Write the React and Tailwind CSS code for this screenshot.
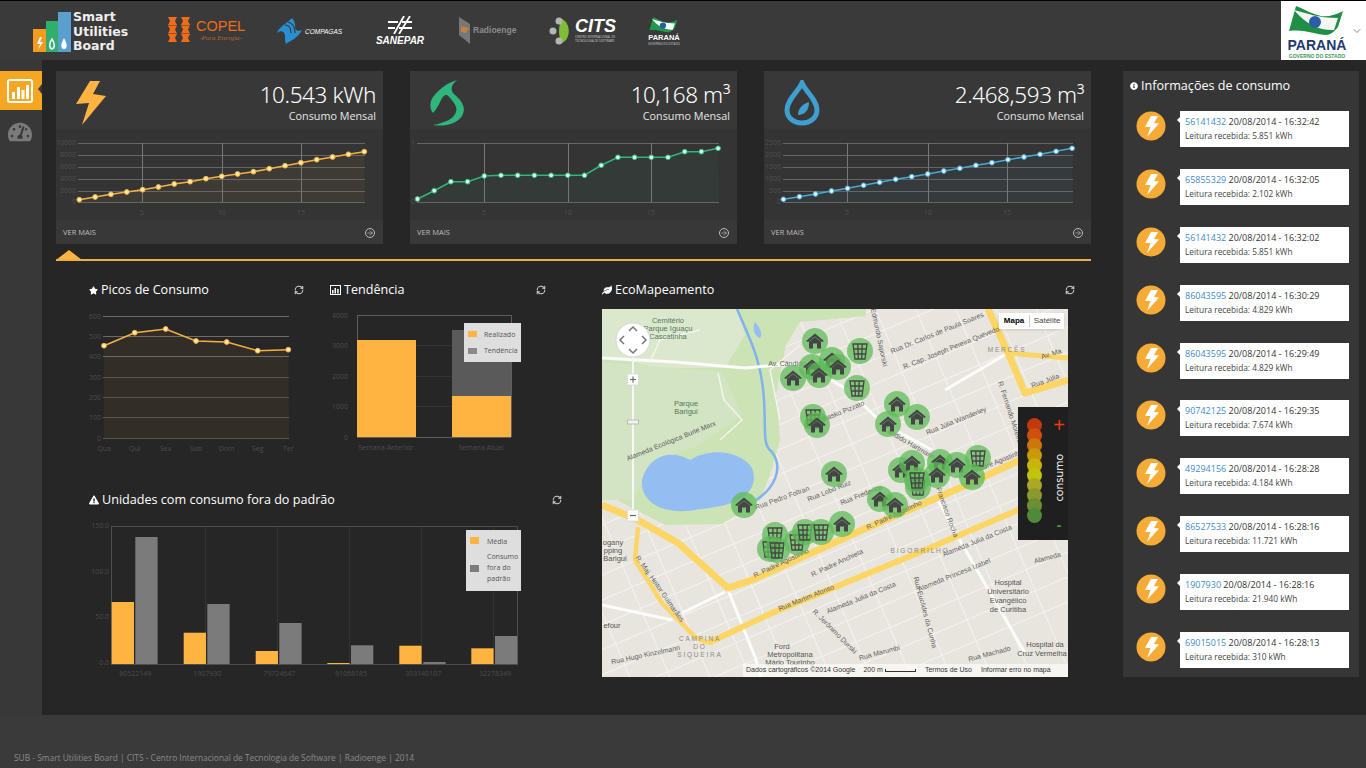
import { ArrowRight, ChevronDown, RefreshCw } from "lucide-react";
import { FaExclamationTriangle, FaInfoCircle, FaLeaf, FaStar, FaTachometerAlt } from "react-icons/fa";

const AMBER = "#ffb340";

// ---- data (screen coordinates, the svgs use them through their viewBox) ----

const cards = [
  {
    x: 56,
    value: "10.543 kWh",
    color: "#f5b041",
    dot: "#ffe9a8",
    fill: "rgba(255,179,64,0.05)",
    x0: 79.3,
    step: 15.83,
    left: 78,
    right: 365,
    ys: [199.7, 197, 194.3, 192, 189.7, 187, 184, 181.7, 178.7, 176.3, 174, 171.7, 168.7, 165.7, 162.7, 159.7, 157, 154.3, 151.7],
    gridY: [143, 155, 167, 179, 191, 202],
    gridX: [142, 222, 301],
    yLabels: ["10000", "8000", "6000", "4000", "2000", "0"],
  },
  {
    x: 410,
    value: "10,168 m³",
    color: "#2eb67d",
    dot: "#d6ffe9",
    fill: "rgba(46,182,125,0.05)",
    x0: 417.5,
    step: 16.7,
    left: 417,
    right: 719,
    ys: [199, 190.7, 181.7, 181.7, 176, 175.3, 175.3, 175.3, 175.3, 175.3, 175.3, 165.3, 157.3, 157.3, 157.3, 157.3, 151.7, 151.7, 148.3],
    gridY: [143, 202],
    gridX: [484, 568, 651],
    yLabels: ["1", "0"],
  },
  {
    x: 764,
    value: "2.468,593 m³",
    color: "#49a9d6",
    dot: "#d9f4ff",
    fill: "rgba(73,169,214,0.05)",
    x0: 783.4,
    step: 16.04,
    left: 783,
    right: 1073,
    ys: [199.3, 196.7, 194, 191, 188.3, 185.3, 182.3, 179.3, 176.7, 174, 171, 168.3, 165.3, 162.7, 159.7, 157, 154.3, 151.3, 148.3],
    gridY: [143, 155, 167, 179, 191, 202],
    gridX: [847, 928, 1007],
    yLabels: ["2500", "2000", "1500", "1000", "500", "0"],
  },
];

const leituras = [
  ["56141432", "16:32:42", "5.851"],
  ["65855329", "16:32:05", "2.102"],
  ["56141432", "16:32:02", "5.851"],
  ["86043595", "16:30:29", "4.829"],
  ["86043595", "16:29:49", "4.829"],
  ["90742125", "16:29:35", "7.674"],
  ["49294156", "16:28:28", "4.184"],
  ["86527533", "16:28:16", "11.721"],
  ["1907930", "16:28:16", "21.940"],
  ["69015015", "16:28:13", "310"],
];

const picos = [
  [104, 345.7],
  [134.7, 332.7],
  [165.7, 329],
  [196, 341],
  [226.7, 342],
  [257.7, 350.7],
  [288.3, 349.7],
];

const foraPadrao = [
  ["80522149", 111.7, 602, 135.3, 537],
  ["1907930", 183.7, 632.7, 207.3, 604],
  ["79724647", 255.7, 651, 279.3, 623],
  ["91068185", 327.3, 663, 351, 645.3],
  ["303140107", 399.3, 645.7, 423.3, 662],
  ["32278349", 471.3, 648.3, 495, 636],
];

const marcadores = [
  ["h", 815, 341], ["b", 860, 351], ["h", 812, 367], ["h", 832, 360], ["h", 838, 367],
  ["h", 819, 375], ["h", 793, 378], ["b", 857, 388], ["b", 813, 417], ["h", 817, 425],
  ["h", 897, 404], ["h", 917, 417], ["h", 888, 424], ["h", 834, 474], ["h", 744, 505],
  ["b", 775, 535], ["b", 770, 549], ["b", 777, 550], ["b", 797, 542], ["b", 805, 532],
  ["b", 821, 532], ["h", 842, 524], ["h", 880, 499], ["h", 895, 505], ["h", 901, 470],
  ["h", 912, 463], ["h", 940, 462], ["h", 957, 465], ["b", 978, 458], ["h", 972, 477],
  ["b", 918, 487], ["h", 937, 475], ["b", 917, 480],
];

const ruas = [
  [938, 335, -22, "Rua Dr. Carlos de Paula Soares"],
  [952, 350, -22, "R. Cap. Joseph Pereira Quevedo"],
  [877, 338, 78, "Edmundo Saporski"],
  [787, 366, 0, "Av. Cândido"],
  [1052, 356, -18, "Av. Ma"],
  [1046, 383, -20, "Rua Júlia"],
  [1008, 413, 72, "R. Fernando Moreira"],
  [957, 423, -22, "Rua Júlia Wanderley"],
  [835, 417, -22, "Rua Bolasko Pizzato"],
  [908, 445, 30, "Cândido Hartmann"],
  [672, 443, -22, "Alameda Ecológica Burle Marx"],
  [1000, 463, -22, "Padre Agostinho"],
  [783, 500, -20, "Rua Pedro Foltran"],
  [830, 493, -22, "Rua Lobo Ruiz"],
  [862, 497, -22, "Rua Frederico"],
  [945, 513, 70, "Francisco Rocha"],
  [895, 517, -25, "R. Padre Agostinho"],
  [782, 565, -25, "R. Padre Agostinho"],
  [838, 565, -25, "R. Padre Anchieta"],
  [807, 600, -22, "Rua Martim Afonso"],
  [862, 600, -22, "Alameda Julia da Costa"],
  [978, 543, -22, "Alameda Julia da Costa"],
  [955, 577, -22, "Alameda Princesa Izabel"],
  [923, 613, 75, "Rua Euclides da Cunha"],
  [658, 590, 55, "R. Maj. Heitor Guimarães"],
  [833, 633, 45, "R. Jerônimo Durski"],
  [646, 657, -12, "Rua Hugo Kinzelmann"],
  [1048, 560, -15, "Alameda"],
  [880, 655, -15, "Rua Marumbi"],
  [990, 656, -15, "Rua Machado"],
];

const lugares = [
  [668, 323, "Cemitério", "#54785c"],
  [668, 331, "Parque Iguaçu", "#54785c"],
  [668, 339, "Cascatinha", "#54785c"],
  [686, 406, "Parque", "#54785c"],
  [686, 414, "Barigui", "#54785c"],
  [1008, 585, "Hospital", "#555"],
  [1008, 594, "Universitário", "#555"],
  [1008, 603, "Evangélico", "#555"],
  [1008, 612, "de Curitiba", "#555"],
  [1045, 647, "Hospital da", "#555"],
  [1042, 656, "Cruz Vermelha", "#555"],
  [782, 649, "Ford", "#555"],
  [790, 657, "Metropolitana", "#555"],
  [790, 665, "Mário Tourinho", "#555"],
  [613, 545, "ogany", "#555"],
  [613, 553, "pping", "#555"],
  [615, 561, "Barigui", "#555"],
  [612, 628, "efour", "#555"],
];

const bairros = [
  [1007, 352, "MERCÊS"],
  [920, 553, "BIGORRILHO"],
  [700, 641, "CAMPINA"],
  [700, 649, "DO"],
  [700, 657, "SIQUEIRA"],
];

const escala = ["#c2380f", "#cf500d", "#cc760b", "#c89a0a", "#c8b40a", "#c2c40c", "#aaa824", "#8a9a2e", "#6b9034", "#4f8a3a"];

// ---- small drawings ----

const Bolt = ({ className }) => (
  <svg viewBox="76 16 30 44" className={className}>
    <polygon points="90,16 100,16 93,29 106,31 82,60 89,38 76,39" fill={AMBER} />
  </svg>
);

const Flame = () => (
  <svg viewBox="0 0 35 46" className="w-[35px] h-[46px]">
    <path
      d="M27 0C17 3 9 9 3 17C-1 23 0 30 3 33C7 29 9 24 11 20C13 16 16 13 18 16C22 20 28 26 26 32C24 39 14 43 3 45C14 47 27 44 32 36C37 27 31 20 24 14C20 10 21 5 27 0Z"
      fill="#2eb67d"
    />
  </svg>
);

const Drop = () => (
  <svg viewBox="0 0 36 46" className="w-[36px] h-[46px]">
    <path d="M18 3C14 12 3 20 3 30C3 38 10 43 18 43C26 43 33 38 33 30C33 20 22 12 18 3Z" fill="none" stroke="#3f9fd0" strokeWidth="5" />
    <path d="M25 22C25 30 21 35 14 35C14 29 18 24 25 22Z" fill="#3f9fd0" />
  </svg>
);

const RoundBolt = () => (
  <svg viewBox="0 0 30 30" className="w-[30px] h-[30px] shrink-0 -mt-[6px]">
    <circle cx="15" cy="15" r="14.5" fill="#f5ab35" />
    <polygon points="15,5 22,5 18,12 23,12.5 11,26 14.5,16 9,16" fill="#fff" />
  </svg>
);

const Casa = ({ x, y }) => (
  <g transform={`translate(${x} ${y})`} fill="#454545">
    <polygon points="-9,0 0,-7.5 9,0 7,1 0,-4.5 -7,1" />
    <path d="M-6 0.5L0 -4L6 0.5V7.5H2V2.5H-2V7.5H-6Z" />
  </g>
);

const Lixeira = ({ x, y }) => (
  <g transform={`translate(${x} ${y})`} fill="none" stroke="#454545" strokeWidth="1.3">
    <path d="M-7 -7H7L5 8H-5Z" />
    <path d="M-6.5 -2H6.5M-6 3H6M-2.2 -7L-1.7 8M2.2 -7L1.7 8" />
  </g>
);

const BarsIcon = () => (
  <svg viewBox="0 0 26 24" className="w-[26px] h-[24px]">
    <rect x="1" y="1" width="24" height="22" rx="2" fill="none" stroke="#fff" strokeWidth="2" />
    <path d="M5 13h3v7H5zM10 8h3v12h-3zM14.5 11h3v9h-3zM19 6h3v14h-3z" fill="#fff" />
  </svg>
);

const SmallBars = () => (
  <svg viewBox="0 0 11 10" className="w-[11px] h-[10px]">
    <rect x="0.5" y="0.5" width="10" height="9" fill="none" stroke="#fff" />
    <path d="M2 5h1.5v3.5H2zM4.5 3h1.5v5.5H4.5zM7.2 4h1.5v4.5H7.2z" fill="#fff" />
  </svg>
);

const Title = ({ icon, text, className }) => (
  <div className={`flex items-center justify-between h-4 ${className}`}>
    <div className="flex items-center gap-[3px]">
      {icon}
      <span className="text-[12.6px] leading-4 text-white whitespace-nowrap">{text}</span>
    </div>
    <RefreshCw size={10} strokeWidth={2.5} className="text-[#cfcfcf] mr-px" />
  </div>
);

// ---- top cards ----

const Card = ({ card, icon }) => {
  const pts = card.ys.map((y, i) => [card.x0 + i * card.step, y]);
  const line = pts.map((p) => p.join(",")).join(" ");
  const bottom = card.gridY[card.gridY.length - 1];

  return (
    <div className="w-[327px] h-[173px] bg-[#383838] flex flex-col">
      <div className="h-[58px] flex justify-between">
        <div className="ml-5 mt-[9px]">{icon}</div>
        <div className="text-right pr-[7px] pt-[10px]">
          <p className="text-[22.5px] leading-[28px] font-light text-white font-['Noto_Sans',sans-serif] tracking-[-0.4px]">{card.value}</p>
          <p className="text-[10.8px] leading-[14px] text-[#e6e6e6]">Consumo Mensal</p>
        </div>
      </div>
      <svg viewBox={`${card.x} 129 327 91`} className="w-[327px] h-[91px] bg-[#343434]">
        <polygon points={`${card.x0},${bottom} ${line} ${card.right},${bottom}`} fill={card.fill} />
        {card.gridY.map((y) => (
          <line key={y} x1={card.left} x2={card.right} y1={y} y2={y} stroke="#666" strokeWidth="1" shapeRendering="crispEdges" />
        ))}
        {card.gridX.map((x) => (
          <line key={x} x1={x} x2={x} y1={143} y2={bottom} stroke="#777" strokeWidth="1" shapeRendering="crispEdges" />
        ))}
        {card.gridY.map((y, i) => (
          <text key={y} x={card.left - 2} y={y + 2} fontSize="7" fill="#4f4f4f" textAnchor="end">
            {card.yLabels[i]}
          </text>
        ))}
        {[5, 10, 15].map((n, i) => (
          <text key={n} x={card.gridX[i]} y={215} fontSize="7" fill="#4f4f4f" textAnchor="middle">
            {n}
          </text>
        ))}
        <polyline points={line} fill="none" stroke={card.color} strokeWidth="1.6" />
        {pts.map(([x, y]) => (
          <circle key={x} cx={x} cy={y} r="2.4" fill={card.dot} stroke={card.color} strokeWidth="1" />
        ))}
      </svg>
      <div className="flex-1 flex items-center justify-between pl-[7px] pr-[8px] pt-[2px] bg-[#383838]">
        <span className="text-[7.5px] text-[#bdbdbd]">VER MAIS</span>
        <span className="w-[10px] h-[10px] rounded-full border border-[#bdbdbd] flex items-center justify-center">
          <ArrowRight size={8} strokeWidth={2} className="text-[#bdbdbd]" />
        </span>
      </div>
    </div>
  );
};

// ---- lower charts ----

const PicosChart = () => {
  const line = picos.map((p) => p.join(",")).join(" ");
  const labels = ["Qua", "Qui", "Sex", "Sab", "Dom", "Seg", "Ter"];
  return (
    <svg viewBox="89 302 216 155" className="w-[216px] h-[155px] mt-[4px]">
      <polygon points={`104,438 ${line} 289,438`} fill="rgba(255,179,64,0.06)" />
      {[600, 500, 400, 300, 200, 100, 0].map((n, i) => {
        const y = 316.3 + i * 20.3;
        return (
          <g key={n}>
            <line x1="103" x2="289" y1={y} y2={y} stroke={i < 3 ? "#6b6b6b" : "#5c5647"} shapeRendering="crispEdges" />
            <text x="101" y={y + 2.5} fontSize="7" fill="#4c4c4c" textAnchor="end">
              {n}
            </text>
          </g>
        );
      })}
      {picos.map(([x], i) => (
        <text key={x} x={x} y="451" fontSize="7" fill="#4c4c4c" textAnchor="middle">
          {labels[i]}
        </text>
      ))}
      <polyline points={line} fill="none" stroke="#f5b041" strokeWidth="1.5" />
      {picos.map(([x, y]) => (
        <circle key={x} cx={x} cy={y} r="2.4" fill="#ffe9a8" stroke="#f5b041" />
      ))}
    </svg>
  );
};

const TendenciaChart = () => (
  <svg viewBox="330 302 217 155" className="w-[217px] h-[155px] mt-[4px]">
    {[4000, 3000, 2000, 1000, 0].map((n, i) => {
      const y = 315 + i * 30.5;
      return (
        <g key={n}>
          <line x1="357" x2="511" y1={y} y2={y} stroke={i === 0 || i === 4 ? "#5e5e5e" : "#333"} shapeRendering="crispEdges" />
          <text x="348" y={y + 2.5} fontSize="7" fill="#4c4c4c" textAnchor="end">
            {n}
          </text>
        </g>
      );
    })}
    <line x1="357" x2="357" y1="315" y2="437" stroke="#5e5e5e" shapeRendering="crispEdges" />
    <line x1="511" x2="511" y1="315" y2="437" stroke="#5e5e5e" shapeRendering="crispEdges" />
    <rect x="357" y="340" width="59" height="97" fill={AMBER} />
    <rect x="452" y="330" width="59" height="66" fill="#5a5a5a" />
    <rect x="452" y="396" width="59" height="41" fill={AMBER} />
    <text x="386" y="450" fontSize="7" fill="#4c4c4c" textAnchor="middle">
      Semana Anterior
    </text>
    <text x="481" y="450" fontSize="7" fill="#4c4c4c" textAnchor="middle">
      Semana Atual
    </text>
    <rect x="464" y="323" width="57" height="39" fill="#dedede" />
    <rect x="468" y="331" width="9" height="6" fill={AMBER} />
    <rect x="468" y="348" width="9" height="6" fill="#8a8a8a" />
    <text x="484" y="337" fontSize="7" fill="#555">
      Realizado
    </text>
    <text x="484" y="353" fontSize="7" fill="#555">
      Tendência
    </text>
  </svg>
);

const ForaPadraoChart = () => (
  <svg viewBox="89 514 474 170" className="w-[474px] h-[170px] mt-[6px]">
    {[183, 255, 327, 399, 471].map((x) => (
      <line key={x} x1={x + 22} x2={x + 22} y1="526" y2="664" stroke="#333" shapeRendering="crispEdges" />
    ))}
    <rect x="111" y="526" width="406" height="138" fill="none" stroke="#4e4e4e" shapeRendering="crispEdges" />
    {["150.0", "100.0", "50.0", "0.0"].map((n, i) => (
      <text key={n} x="109" y={528 + i * 45.7} fontSize="7" fill="#4c4c4c" textAnchor="end">
        {n}
      </text>
    ))}
    {foraPadrao.map(([id, ax, ay, bx, by]) => (
      <g key={id}>
        <rect x={ax} y={ay} width="22.3" height={664 - ay} fill={AMBER} />
        <rect x={bx} y={by} width="22.3" height={664 - by} fill="#7b7b7b" />
        <text x={bx} y="676" fontSize="7" fill="#4c4c4c" textAnchor="middle">
          {id}
        </text>
      </g>
    ))}
    <rect x="466" y="530" width="55" height="61" fill="#dedede" />
    <rect x="470" y="537" width="9" height="7" fill={AMBER} />
    <rect x="470" y="565" width="9" height="7" fill="#7b7b7b" />
    <text x="487" y="544" fontSize="7" fill="#555">
      Média
    </text>
    <text x="487" y="559" fontSize="7" fill="#555">
      Consumo
    </text>
    <text x="487" y="570" fontSize="7" fill="#555">
      fora do
    </text>
    <text x="487" y="581" fontSize="7" fill="#555">
      padrão
    </text>
  </svg>
);

// ---- map ----

const EcoMapa = () => {
  const horizontais = Array.from({ length: 24 }, (_, i) => 150 + i * 23);
  const verticais = Array.from({ length: 24 }, (_, i) => 430 + i * 37);

  return (
    <div className="relative w-[466px] h-[368px] mt-[11px] overflow-hidden">
      <svg viewBox="602 309 466 368" className="w-[466px] h-[368px]">
        <rect x="602" y="309" width="466" height="368" fill="#e8e5de" />

        {/* street grid */}
        <g transform="rotate(-23 850 500)" stroke="#f4f2ed" strokeWidth="1.1">
          {horizontais.map((y) => (
            <line key={y} x1="400" x2="1300" y1={y} y2={y} />
          ))}
          {verticais.map((x) => (
            <line key={x} x1={x} x2={x} y1="100" y2="900" />
          ))}
        </g>

        {/* parks */}
        <path
          d="M602 309H866V316L800 322L786 345L776 395L780 440L770 475L760 500L722 524L665 525L640 512L602 492Z"
          fill="#cbe3b5"
        />
        <path d="M602 309H738L745 335L725 368H660L602 356Z" fill="#dbe8cd" />
        <path d="M602 362L722 372L742 415L700 445L650 462L634 500H602Z" fill="#d3e4c2" />

        {/* lake and river */}
        <path d="M642 480C648 458 668 448 690 460C712 446 742 452 752 468C760 490 742 506 700 509C670 516 640 506 642 480Z" fill="#94bdf2" />
        <path d="M737 309C748 335 762 360 764 400C766 430 762 445 772 452C785 470 772 490 756 500" fill="none" stroke="#7fb2ef" strokeWidth="2.5" />
        <path d="M755 322C762 330 762 336 760 338C754 336 752 328 755 322Z" fill="#94bdf2" />

        {/* white avenues */}
        <g fill="none" stroke="#fcfcfa" strokeWidth="3">
          <polyline points="602,358 675,362 745,368 802,363 848,390 882,423 932,450" />
          <polyline points="945,390 1008,353" />
          <polyline points="938,500 958,537 1025,653" />
          <polyline points="728,590 755,657 762,680" />
          <polyline points="602,605 672,620" />
          <polyline points="682,613 725,592" />
          <polyline points="633,340 633,516" stroke="#f6f6f6" strokeWidth="2" />
        </g>
        <g fill="none" stroke="#f4f4ee" strokeWidth="1.5">
          <polyline points="718,373 724,400 742,420 720,440" />
          <polyline points="650,362 660,340 700,330" />
          <polyline points="800,345 770,370 780,420" />
        </g>

        {/* yellow avenues */}
        <g fill="none" stroke="#fbd665" strokeWidth="7" strokeLinejoin="round">
          <polyline points="602,505 638,520 678,543 728,588 752,580 862,530 962,487 1020,460" />
          <polyline points="708,643 772,613 918,553 1018,510 1068,490" strokeWidth="6" />
          <polyline points="638,527 635,560 662,603 695,637 708,643" strokeWidth="4.5" />
          <polyline points="988,309 1008,353 1025,393 1068,380" />
          <polyline points="1008,353 1068,358" strokeWidth="5" />
        </g>

        {ruas.map(([x, y, rot, text]) => (
          <text key={`${x}-${y}`} x={x} y={y} transform={`rotate(${rot} ${x} ${y})`} fontSize="7" fill="#5f5f5f" textAnchor="middle" fontFamily="Liberation Sans, sans-serif">
            {text}
          </text>
        ))}
        {lugares.map(([x, y, text, color]) => (
          <text key={`${x}-${y}`} x={x} y={y} fontSize="7.5" fill={color} textAnchor="middle" fontFamily="Liberation Sans, sans-serif">
            {text}
          </text>
        ))}
        {bairros.map(([x, y, text]) => (
          <text key={text} x={x} y={y} fontSize="6.5" fill="#8d8a84" textAnchor="middle" letterSpacing="1.8" fontFamily="Liberation Sans, sans-serif">
            {text}
          </text>
        ))}

        {/* markers */}
        {marcadores.map(([tipo, x, y]) => (
          <g key={`${tipo}-${x}-${y}`}>
            <circle cx={x} cy={y} r="13" fill="#5fbb58" opacity="0.75" />
            {tipo === "h" ? <Casa x={x} y={y} /> : <Lixeira x={x} y={y} />}
          </g>
        ))}

        {/* pan and zoom controls */}
        <circle cx="633" cy="340" r="17" fill="#fff" stroke="#d8d8d8" />
        <path d="M629 331L633 327L637 331M629 349L633 353L637 349M624 336L620 340L624 344M642 336L646 340L642 344" fill="none" stroke="#777" strokeWidth="1.5" />
        <rect x="627.5" y="374" width="11" height="11" fill="#fff" stroke="#ddd" />
        <path d="M630 379.5H636M633 376.5V382.5" stroke="#666" strokeWidth="1.2" />
        <rect x="627.5" y="420" width="11" height="4" fill="#f3f3f3" stroke="#bbb" />
        <rect x="627.5" y="510" width="11" height="11" fill="#fff" stroke="#ddd" />
        <path d="M630 515.5H636" stroke="#666" strokeWidth="1.2" />
      </svg>

      <div className="absolute top-[4px] left-[397px] w-[65px] h-4 bg-white flex items-center text-[8px] font-['Liberation_Sans',sans-serif] shadow">
        <span className="w-[30px] text-center font-bold text-black">Mapa</span>
        <span className="flex-1 text-center text-[#444] border-l border-[#ccc]">Satélite</span>
      </div>

      <div className="absolute bottom-0 right-0 w-[325px] h-[13px] bg-white/60 flex items-center pl-[3px] text-[7px] text-[#333] font-['Liberation_Sans',sans-serif] whitespace-nowrap">
        <span>Dados cartográficos ©2014 Google</span>
        <span className="ml-2">200 m</span>
        <span className="ml-[2px] w-[31px] h-[3px] border-x border-b border-[#333]" />
        <span className="ml-[9px]">Termos de Uso</span>
        <span className="ml-[9px]">Informar erro no mapa</span>
      </div>

      <div className="absolute top-[98px] right-0 w-[50px] h-[133px] bg-[#1f1f1f] flex">
        <div className="w-[32px] pt-[11px] flex flex-col items-center">
          {escala.map((c) => (
            <span key={c} className="w-[15px] h-[15px] rounded-full -mb-[5px] shrink-0" style={{ background: c }} />
          ))}
        </div>
        <div className="flex-1 flex flex-col items-center justify-between pt-[6px] pb-[8px]">
          <span className="text-[20px] leading-[24px] text-[#ee3a12] font-['Liberation_Sans',sans-serif]">+</span>
          <span className="text-[11px] text-white [writing-mode:vertical-rl] rotate-180">consumo</span>
          <span className="text-[14px] leading-[14px] font-bold text-[#4f9a3a]">-</span>
        </div>
      </div>
    </div>
  );
};

// ---- header logos ----

const Logos = () => (
  <div className="flex items-center h-full">
    <div className="flex items-center ml-[33px] w-[135px]">
      <svg viewBox="0 0 38 40" className="w-[38px] h-[40px] mt-[3px]">
        <rect x="0" y="17" width="14" height="23" fill="#f39a1f" />
        <rect x="13" y="9" width="13" height="31" fill="#2fae6c" />
        <rect x="25" y="0" width="13" height="40" fill="#5b9fce" />
        <polygon points="7,25 4,32 7,32 5,38 10,30 7,30 9,25" fill="#fff" />
        <path d="M19 27C16 31 16 36 19 37C22 36 22 32 19 27Z" fill="none" stroke="#fff" strokeWidth="1.5" />
        <path d="M31 26C28 31 27 37 31 37C35 37 34 31 31 26Z" fill="#fff" />
      </svg>
      <div className="ml-[2px] mt-[3px] text-[12.5px] leading-[14.8px] font-bold text-[#eee] font-['DejaVu_Sans',sans-serif]">
        <p>Smart</p>
        <p>Utilities</p>
        <p>Board</p>
      </div>
    </div>

    <div className="flex items-center w-[109px]">
      <svg viewBox="0 0 22 25" className="w-[22px] h-[25px] -mt-[2px]">
        <path
          d="M0 0H9L7 4L9 8H0L2 4ZM13 0H22L20 4L22 8H13L15 4ZM0 8.5H9L7 12.5L9 16.5H0L2 12.5ZM13 8.5H22L20 12.5L22 16.5H13L15 12.5ZM0 17H9L7 21L9 25H0L2 21ZM13 17H22L20 21L22 25H13L15 21Z"
          fill="#ef6c18"
        />
      </svg>
      <div className="ml-[6px] text-center">
        <p className="text-[14.5px] leading-[16px] text-[#ef6c18] font-['Liberation_Sans',sans-serif]">COPEL</p>
        <p className="text-[7px] leading-[9px] italic text-[#b5652a] font-['Liberation_Serif',serif]">-Pura Energia-</p>
      </div>
    </div>

    <div className="flex items-center w-[99px]">
      <svg viewBox="0 0 27 28" className="w-[27px] h-[28px]">
        <path d="M15 1C10 6 1 11 0 16C4 13 7 14 8 18C8 22 8 25 9 27C14 23 20 22 25 13C20 15 18 13 18 9C18 6 17 3 15 1Z" fill="#2a8fd0" />
        <path d="M8 8C12 8 14 11 14 16M11 5C15 6 18 10 18 16" fill="none" stroke="#383838" strokeWidth="1.2" />
      </svg>
      <span className="text-[6.5px] italic text-white ml-[1px] mt-[3px] font-['Liberation_Sans',sans-serif]">COMPAGAS</span>
    </div>

    <div className="flex flex-col items-center w-[48px] mr-[34px]">
      <svg viewBox="0 0 24 18" className="w-[24px] h-[18px]">
        <path d="M0 6H10M14 6H24M0 12H7M11 12H24M6 18L16 0M11 18L22 0" stroke="#fff" strokeWidth="1.8" fill="none" />
      </svg>
      <span className="text-[10px] leading-[11px] mt-px font-bold italic text-white font-['Liberation_Sans',sans-serif]">SANEPAR</span>
    </div>

    <div className="flex items-center w-[91px]">
      <svg viewBox="0 0 13 27" className="w-[13px] h-[27px]">
        <polygon points="1,0 12,7 12,27 1,18" fill="#777" />
        <polygon points="3,9 11,11 8,16 3,15" fill="#c6803f" />
      </svg>
      <span className="text-[8.5px] font-bold text-[#8b8b8b] ml-[2px] font-['Liberation_Sans',sans-serif]">Radioenge</span>
    </div>

    <div className="flex items-center w-[99px]">
      <svg viewBox="0 0 27 28" className="w-[27px] h-[28px]">
        <path d="M13 2C22 6 22 22 13 26C9 20 9 8 13 2Z" fill="#7ebd35" />
        <circle cx="10" cy="4" r="3.5" fill="#b5b5b5" />
        <circle cx="4" cy="14" r="3.5" fill="#b5b5b5" />
        <circle cx="10" cy="24" r="3.5" fill="#b5b5b5" />
      </svg>
      <div className="-ml-px">
        <p className="text-[18px] leading-[17px] font-bold italic text-white font-['Liberation_Sans',sans-serif]">CITS</p>
        <p className="text-[3px] leading-[4px] text-[#ccc]">CENTRO INTERNACIONAL DE</p>
        <p className="text-[3px] leading-[4px] text-[#ccc]">TECNOLOGIA DE SOFTWARE</p>
      </div>
    </div>

    <div className="flex flex-col items-center w-[32px]">
      <svg viewBox="0 0 58 32" className="w-[30px] h-[18px]">
        <path d="M8 1C16 4 24 9 33 11C40 12 48 10 55 6L50 22C46 27 42 30 38 30C28 30 18 24 1 26Z" fill="#1f9a4a" />
        <path d="M6 5C18 8 30 13 50 13L46 25C34 26 18 20 6 5Z" fill="#fff" />
        <circle cx="27" cy="17" r="6" fill="#2a5ea8" />
      </svg>
      <span className="text-[7.5px] leading-[8px] font-bold text-white font-['Liberation_Sans',sans-serif]">PARANÁ</span>
      <span className="text-[3px] leading-[4px] text-[#ccc]">GOVERNO DO ESTADO</span>
    </div>
  </div>
);

const App = () => {
  return (
    <div className="w-[1366px] h-[768px] overflow-hidden bg-[#3a3a3a] font-['Open_Sans',sans-serif]">
      {/* HEADER */}

      <header className="h-[60px] bg-[#3a3a3a] border-t border-black flex justify-between">
        <Logos />

        <div className="w-[85px] h-[59px] bg-white flex">
          <div className="flex flex-col items-center ml-[3px] w-[66px]">
            <svg viewBox="0 0 58 32" className="w-[58px] h-[32px] mt-1">
              <path d="M8 1C16 4 24 9 33 11C40 12 48 10 55 6L50 22C46 27 42 30 38 30C28 30 18 24 1 26Z" fill="#1f8f46" />
              <path d="M6 5C18 8 30 13 50 13L46 25C34 26 18 20 6 5Z" fill="#f4f7f2" />
              <circle cx="27" cy="17" r="6" fill="#2a5ea8" />
            </svg>
            <span className="text-[14px] leading-[15px] mt-px font-bold text-[#1f3a70] font-['Liberation_Sans',sans-serif]">PARANÁ</span>
            <span className="text-[5px] leading-[7px] font-bold text-[#3d9a5b] font-['Liberation_Sans',sans-serif]">GOVERNO DO ESTADO</span>
          </div>
          <ChevronDown size={12} className="text-[#888] mt-[24px] ml-[1px]" />
        </div>
      </header>

      <div className="flex h-[655px]">
        {/* SIDEBAR */}

        <aside className="w-[42px] pt-[11px] bg-[#383838]">
          <div className="relative h-[39px] bg-[#f5a623] flex items-center justify-center pr-[3px]">
            <BarsIcon />
            <span className="absolute right-0 top-[13px] w-0 h-0 border-y-[5px] border-y-transparent border-r-[4px] border-r-[#383838]" />
          </div>
          <div className="flex justify-center mt-[10px] pr-[2px]">
            <FaTachometerAlt size={24} className="text-[#7a7a7a]" />
          </div>
        </aside>

        {/* MAIN */}

        <main className="flex-1 bg-[#262626] pl-[14px] pt-[11px] flex items-start">
          <div className="w-[1035px]">
            <div className="flex gap-[27px]">
              <Card card={cards[0]} icon={<Bolt className="w-[30px] h-[44px] mt-px" />} />
              <Card card={cards[1]} icon={<Flame />} />
              <Card card={cards[2]} icon={<Drop />} />
            </div>

            <div className="mt-[6px] h-3 flex flex-col">
              <span className="shrink-0 w-0 h-0 border-x-[13.5px] border-x-transparent border-b-[10.5px] border-b-[#ffb340]" />
              <span className="shrink-0 h-[2px] -mt-px bg-[#f0ac45]" />
            </div>

            <div className="flex mt-[20px] pl-[33px]">
              <div className="w-[513px] shrink-0">
                <div className="flex gap-[25px]">
                  <div className="w-[216px]">
                    <Title icon={<FaStar size={9} className="text-white" />} text="Picos de Consumo" className="w-[216px]" />
                    <PicosChart />
                  </div>
                  <div className="w-[217px]">
                    <Title icon={<SmallBars />} text="Tendência" className="w-[217px]" />
                    <TendenciaChart />
                  </div>
                </div>
                <Title icon={<FaExclamationTriangle size={10} className="text-white" />} text="Unidades com consumo fora do padrão" className="w-[474px] mt-[35px]" />
                <ForaPadraoChart />
              </div>
              <div className="w-[474px]">
                <Title icon={<FaLeaf size={10} className="text-white" />} text="EcoMapeamento" className="w-[474px]" />
                <EcoMapa />
              </div>
            </div>
          </div>

          {/* INFORMACOES */}

          <section className="ml-[32px] w-[236px] h-[606px] bg-[#363636] pt-[7px] shrink-0">
            <div className="flex items-center gap-[3px] pl-[7px] h-4">
              <FaInfoCircle size={8} className="text-white" />
              <span className="text-[12.6px] leading-4 text-white">Informações de consumo</span>
            </div>
            <div className="mt-[17px] flex flex-col gap-[21.9px]">
              {leituras.map(([id, hora, kwh], i) => (
                <div key={i} className="flex items-center h-9 pl-[13px]">
                  <RoundBolt />
                  <div className="relative ml-[14px] w-[169px] h-9 bg-white pl-[5px] pt-[4px]">
                    <span className="absolute -left-[3px] top-[6px] w-0 h-0 border-y-[3.5px] border-y-transparent border-r-[3px] border-r-white" />
                    <p className="text-[9px] leading-[14px] text-[#333] whitespace-nowrap">
                      <span className="text-[#428bca]">{id}</span> 20/08/2014 - {hora}
                    </p>
                    <p className="text-[8.3px] leading-[14px] text-[#444] whitespace-nowrap">Leitura recebida: {kwh} kWh</p>
                  </div>
                </div>
              ))}
            </div>
          </section>
        </main>
      </div>

      {/* FOOTER */}

      <footer className="h-[53px] pl-[14px] pt-[37px] text-[8.4px] leading-3 text-[#8a8a8a]">
        SUB - Smart Utilities Board | CITS - Centro Internacional de Tecnologia de Software | Radioenge | 2014
      </footer>
    </div>
  );
};

export default App;
